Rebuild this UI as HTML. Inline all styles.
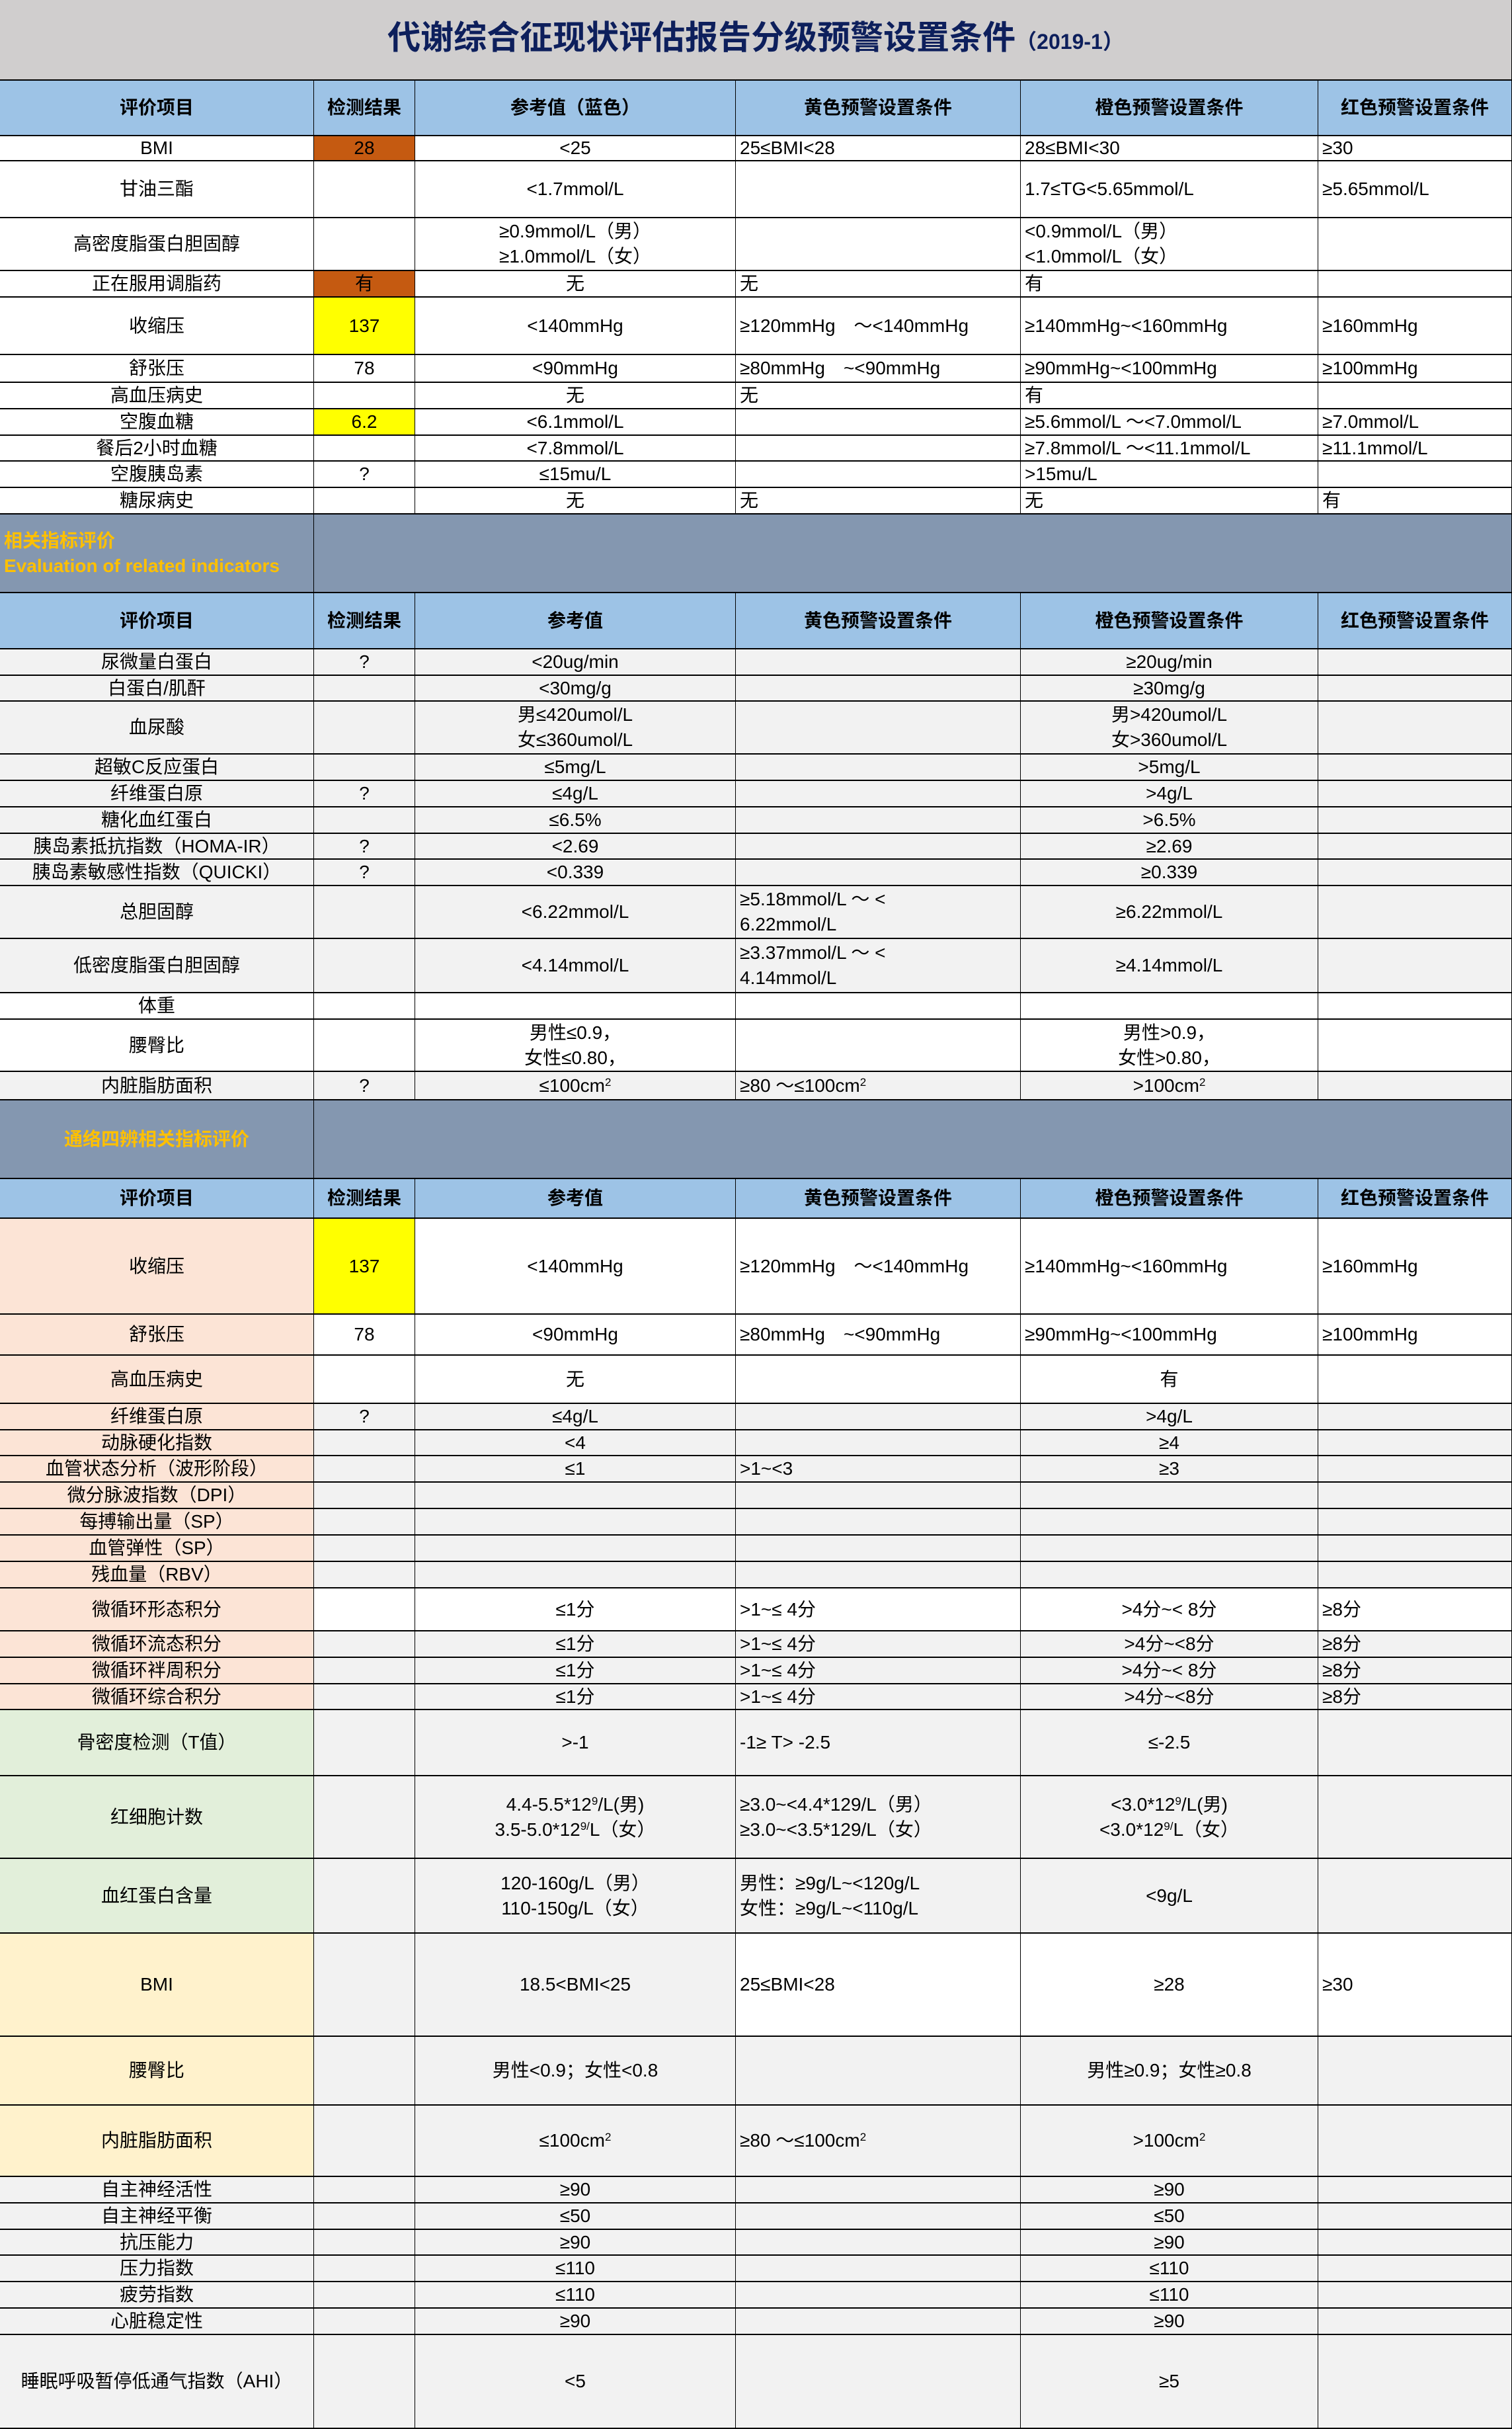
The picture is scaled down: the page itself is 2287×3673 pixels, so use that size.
<!DOCTYPE html>
<html><head><meta charset="utf-8">
<style>
html,body{margin:0;padding:0;background:#fff}
.g{display:grid;width:2287px;height:3673px;grid-template-columns:475px 153px 485px 431px 450px 293px;
grid-template-rows:122px 84px 38px 86px 80px 40px 87px 42px 40px 40px 39px 40px 40px 119px 85px 40px 39px 80px 40px 40px 40px 39px 40px 80px 82px 40px 79px 43px 119px 60px 145px 62px 73px 40px 39px 40px 40px 40px 40px 40px 65px 40px 40px 39px 100px 125px 113px 156px 104px 108px 40px 40px 39px 40px 40px 40px 142px;
font-family:"Liberation Sans","Noto Sans CJK SC",sans-serif;color:#000}
.g>div{box-sizing:border-box;border-right:1px solid #000;border-bottom:2px solid #000;display:flex;align-items:center;justify-content:center;text-align:center;font-size:28px;line-height:38px;overflow:hidden;white-space:nowrap;background:#fff}
.g>div.l{justify-content:flex-start;text-align:left;padding-left:6px}
.g>div.t{grid-column:span 6;background:#d0cece;color:#0d1f5c;font-weight:bold;font-size:50px}
.t small{font-size:32px}
.g>div.h{background:#9dc3e6;font-weight:bold}
.g>div.s{background:#8497b0;color:#ffc000;font-weight:bold}
.g>div.sp{grid-column:span 5;background:#8497b0}
.g>div.o{background:#c55a11}
.g>div.y{background:#ffff00}
.g>div.gy{background:#f2f2f2}
.g>div.p{background:#fce4d6}
.g>div.gr{background:#e2efda}
.g>div.cr{background:#fff2cc}
sup{font-size:17px;line-height:0;vertical-align:9px}
</style></head><body>
<div class="g">
<div class="t"><span>代谢综合征现状评估报告分级预警设置条件<small>（2019-1）</small></span></div>
<div class="h">评价项目</div><div class="h">检测结果</div><div class="h">参考值（蓝色）</div><div class="h">黄色预警设置条件</div><div class="h">橙色预警设置条件</div><div class="h">红色预警设置条件</div>
<div>BMI</div><div class="o">28</div><div>&lt;25</div><div class="l">25≤BMI&lt;28</div><div class="l">28≤BMI&lt;30</div><div class="l">≥30</div>
<div>甘油三酯</div><div></div><div>&lt;1.7mmol/L</div><div></div><div class="l">1.7≤TG&lt;5.65mmol/L</div><div class="l">≥5.65mmol/L</div>
<div>高密度脂蛋白胆固醇</div><div></div><div><span>≥0.9mmol/L（男）<br>≥1.0mmol/L（女）</span></div><div></div><div class="l"><span>&lt;0.9mmol/L（男）<br>&lt;1.0mmol/L（女）</span></div><div></div>
<div>正在服用调脂药</div><div class="o">有</div><div>无</div><div class="l">无</div><div class="l">有</div><div></div>
<div>收缩压</div><div class="y">137</div><div>&lt;140mmHg</div><div class="l">≥120mmHg　～&lt;140mmHg</div><div class="l">≥140mmHg~&lt;160mmHg</div><div class="l">≥160mmHg</div>
<div>舒张压</div><div>78</div><div>&lt;90mmHg</div><div class="l">≥80mmHg　~&lt;90mmHg</div><div class="l">≥90mmHg~&lt;100mmHg</div><div class="l">≥100mmHg</div>
<div>高血压病史</div><div></div><div>无</div><div class="l">无</div><div class="l">有</div><div></div>
<div>空腹血糖</div><div class="y">6.2</div><div>&lt;6.1mmol/L</div><div></div><div class="l">≥5.6mmol/L ～&lt;7.0mmol/L</div><div class="l">≥7.0mmol/L</div>
<div>餐后2小时血糖</div><div></div><div>&lt;7.8mmol/L</div><div></div><div class="l">≥7.8mmol/L ～&lt;11.1mmol/L</div><div class="l">≥11.1mmol/L</div>
<div>空腹胰岛素</div><div>?</div><div>≤15mu/L</div><div></div><div class="l">&gt;15mu/L</div><div></div>
<div>糖尿病史</div><div></div><div>无</div><div class="l">无</div><div class="l">无</div><div class="l">有</div>
<div class="s l"><span>相关指标评价<br>Evaluation of related indicators</span></div><div class="sp"></div>
<div class="h">评价项目</div><div class="h">检测结果</div><div class="h">参考值</div><div class="h">黄色预警设置条件</div><div class="h">橙色预警设置条件</div><div class="h">红色预警设置条件</div>
<div class="gy">尿微量白蛋白</div><div class="gy">?</div><div class="gy">&lt;20ug/min</div><div class="gy"></div><div class="gy">≥20ug/min</div><div class="gy"></div>
<div class="gy">白蛋白/肌酐</div><div class="gy"></div><div class="gy">&lt;30mg/g</div><div class="gy"></div><div class="gy">≥30mg/g</div><div class="gy"></div>
<div class="gy">血尿酸</div><div class="gy"></div><div class="gy"><span>男≤420umol/L<br>女≤360umol/L</span></div><div class="gy"></div><div class="gy"><span>男&gt;420umol/L<br>女&gt;360umol/L</span></div><div class="gy"></div>
<div class="gy">超敏C反应蛋白</div><div class="gy"></div><div class="gy">≤5mg/L</div><div class="gy"></div><div class="gy">&gt;5mg/L</div><div class="gy"></div>
<div class="gy">纤维蛋白原</div><div class="gy">?</div><div class="gy">≤4g/L</div><div class="gy"></div><div class="gy">&gt;4g/L</div><div class="gy"></div>
<div class="gy">糖化血红蛋白</div><div class="gy"></div><div class="gy">≤6.5%</div><div class="gy"></div><div class="gy">&gt;6.5%</div><div class="gy"></div>
<div class="gy">胰岛素抵抗指数（HOMA-IR）</div><div class="gy">?</div><div class="gy">&lt;2.69</div><div class="gy"></div><div class="gy">≥2.69</div><div class="gy"></div>
<div class="gy">胰岛素敏感性指数（QUICKI）</div><div class="gy">?</div><div class="gy">&lt;0.339</div><div class="gy"></div><div class="gy">≥0.339</div><div class="gy"></div>
<div class="gy">总胆固醇</div><div class="gy"></div><div class="gy">&lt;6.22mmol/L</div><div class="gy l"><span>≥5.18mmol/L ～ &lt;<br>6.22mmol/L</span></div><div class="gy">≥6.22mmol/L</div><div class="gy"></div>
<div class="gy">低密度脂蛋白胆固醇</div><div class="gy"></div><div class="gy">&lt;4.14mmol/L</div><div class="gy l"><span>≥3.37mmol/L ～ &lt;<br>4.14mmol/L</span></div><div class="gy">≥4.14mmol/L</div><div class="gy"></div>
<div>体重</div><div></div><div></div><div></div><div></div><div></div>
<div>腰臀比</div><div></div><div><span>男性≤0.9，<br>女性≤0.80，</span></div><div></div><div><span>男性&gt;0.9，<br>女性&gt;0.80，</span></div><div></div>
<div class="gy">内脏脂肪面积</div><div class="gy">?</div><div class="gy"><span>≤100cm<sup>2</sup></span></div><div class="gy l"><span>≥80 ～≤100cm<sup>2</sup></span></div><div class="gy"><span>&gt;100cm<sup>2</sup></span></div><div class="gy"></div>
<div class="s">通络四辨相关指标评价</div><div class="sp"></div>
<div class="h">评价项目</div><div class="h">检测结果</div><div class="h">参考值</div><div class="h">黄色预警设置条件</div><div class="h">橙色预警设置条件</div><div class="h">红色预警设置条件</div>
<div class="p">收缩压</div><div class="y">137</div><div>&lt;140mmHg</div><div class="l">≥120mmHg　～&lt;140mmHg</div><div class="l">≥140mmHg~&lt;160mmHg</div><div class="l">≥160mmHg</div>
<div class="p">舒张压</div><div>78</div><div>&lt;90mmHg</div><div class="l">≥80mmHg　~&lt;90mmHg</div><div class="l">≥90mmHg~&lt;100mmHg</div><div class="l">≥100mmHg</div>
<div class="p">高血压病史</div><div></div><div>无</div><div></div><div>有</div><div></div>
<div class="p">纤维蛋白原</div><div class="gy">?</div><div class="gy">≤4g/L</div><div class="gy"></div><div class="gy">&gt;4g/L</div><div class="gy"></div>
<div class="p">动脉硬化指数</div><div class="gy"></div><div class="gy">&lt;4</div><div class="gy"></div><div class="gy">≥4</div><div class="gy"></div>
<div class="p">血管状态分析（波形阶段）</div><div class="gy"></div><div class="gy">≤1</div><div class="gy l">&gt;1~&lt;3</div><div class="gy">≥3</div><div class="gy"></div>
<div class="p">微分脉波指数（DPI）</div><div class="gy"></div><div class="gy"></div><div class="gy"></div><div class="gy"></div><div class="gy"></div>
<div class="p">每搏输出量（SP）</div><div class="gy"></div><div class="gy"></div><div class="gy"></div><div class="gy"></div><div class="gy"></div>
<div class="p">血管弹性（SP）</div><div class="gy"></div><div class="gy"></div><div class="gy"></div><div class="gy"></div><div class="gy"></div>
<div class="p">残血量（RBV）</div><div class="gy"></div><div class="gy"></div><div class="gy"></div><div class="gy"></div><div class="gy"></div>
<div class="p">微循环形态积分</div><div></div><div>≤1分</div><div class="l">&gt;1~≤ 4分</div><div>&gt;4分~&lt; 8分</div><div class="l">≥8分</div>
<div class="p">微循环流态积分</div><div class="gy"></div><div class="gy">≤1分</div><div class="gy l">&gt;1~≤ 4分</div><div class="gy">&gt;4分~&lt;8分</div><div class="gy l">≥8分</div>
<div class="p">微循环袢周积分</div><div class="gy"></div><div class="gy">≤1分</div><div class="gy l">&gt;1~≤ 4分</div><div class="gy">&gt;4分~&lt; 8分</div><div class="gy l">≥8分</div>
<div class="p">微循环综合积分</div><div class="gy"></div><div class="gy">≤1分</div><div class="gy l">&gt;1~≤ 4分</div><div class="gy">&gt;4分~&lt;8分</div><div class="gy l">≥8分</div>
<div class="gr">骨密度检测（T值）</div><div class="gy"></div><div class="gy">&gt;-1</div><div class="gy l">-1≥ T&gt; -2.5</div><div class="gy">≤-2.5</div><div class="gy"></div>
<div class="gr">红细胞计数</div><div class="gy"></div><div class="gy"><span>4.4-5.5*12<sup>9</sup>/L(男)<br>3.5-5.0*12<sup>9/</sup>L（女）</span></div><div class="gy l"><span>≥3.0~&lt;4.4*129/L（男）<br>≥3.0~&lt;3.5*129/L（女）</span></div><div class="gy"><span>&lt;3.0*12<sup>9</sup>/L(男)<br>&lt;3.0*12<sup>9/</sup>L（女）</span></div><div class="gy"></div>
<div class="gr">血红蛋白含量</div><div class="gy"></div><div class="gy"><span>120-160g/L（男）<br>110-150g/L（女）</span></div><div class="gy l"><span>男性：≥9g/L~&lt;120g/L<br>女性：≥9g/L~&lt;110g/L</span></div><div class="gy">&lt;9g/L</div><div class="gy"></div>
<div class="cr">BMI</div><div class="gy"></div><div class="gy">18.5&lt;BMI&lt;25</div><div class="l">25≤BMI&lt;28</div><div>≥28</div><div class="l">≥30</div>
<div class="cr">腰臀比</div><div class="gy"></div><div class="gy">男性&lt;0.9；女性&lt;0.8</div><div class="gy"></div><div class="gy">男性≥0.9；女性≥0.8</div><div class="gy"></div>
<div class="cr">内脏脂肪面积</div><div class="gy"></div><div class="gy"><span>≤100cm<sup>2</sup></span></div><div class="gy l"><span>≥80 ～≤100cm<sup>2</sup></span></div><div class="gy"><span>&gt;100cm<sup>2</sup></span></div><div class="gy"></div>
<div class="gy">自主神经活性</div><div class="gy"></div><div class="gy">≥90</div><div class="gy"></div><div class="gy">≥90</div><div class="gy"></div>
<div class="gy">自主神经平衡</div><div class="gy"></div><div class="gy">≤50</div><div class="gy"></div><div class="gy">≤50</div><div class="gy"></div>
<div class="gy">抗压能力</div><div class="gy"></div><div class="gy">≥90</div><div class="gy"></div><div class="gy">≥90</div><div class="gy"></div>
<div class="gy">压力指数</div><div class="gy"></div><div class="gy">≤110</div><div class="gy"></div><div class="gy">≤110</div><div class="gy"></div>
<div class="gy">疲劳指数</div><div class="gy"></div><div class="gy">≤110</div><div class="gy"></div><div class="gy">≤110</div><div class="gy"></div>
<div class="gy">心脏稳定性</div><div class="gy"></div><div class="gy">≥90</div><div class="gy"></div><div class="gy">≥90</div><div class="gy"></div>
<div class="gy">睡眠呼吸暂停低通气指数（AHI）</div><div class="gy"></div><div class="gy">&lt;5</div><div class="gy"></div><div class="gy">≥5</div><div class="gy"></div>
</div>
</body></html>
